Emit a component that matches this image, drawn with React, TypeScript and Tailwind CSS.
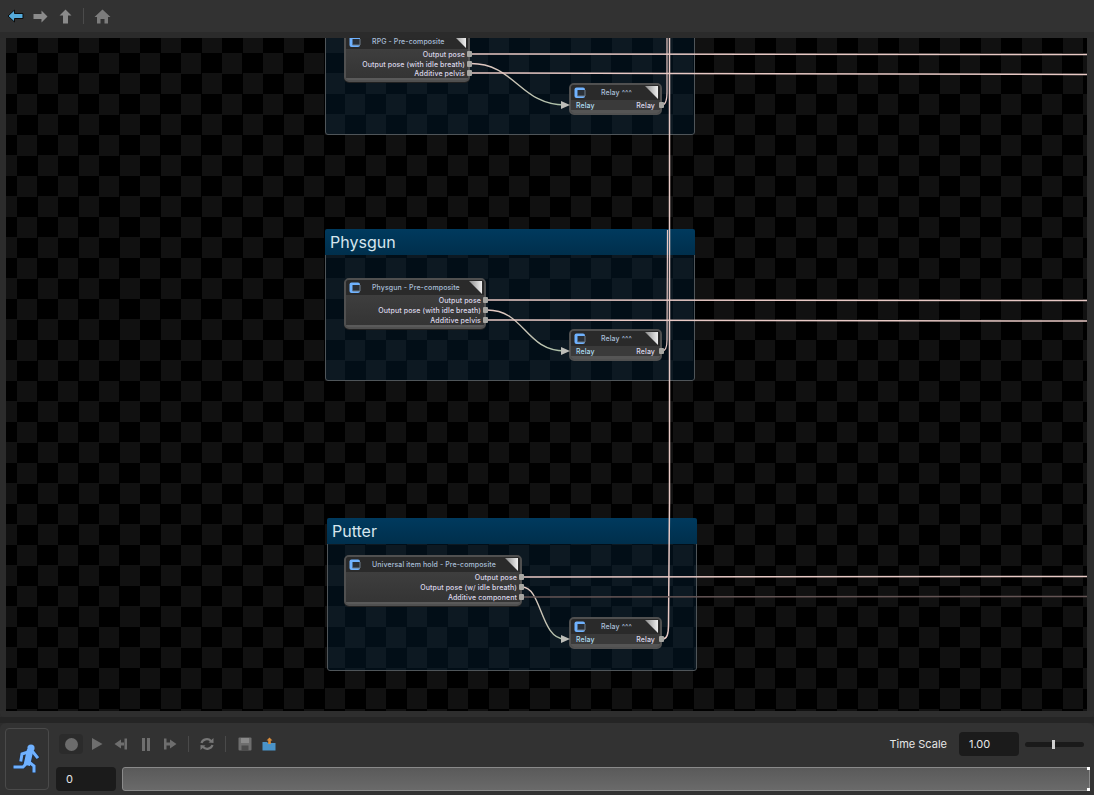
import type { ReactNode } from "react";

const font = "font-['Inter','Liberation_Sans',sans-serif]";

function NodeIcon() {
  return (
    <svg width="12" height="12" viewBox="0 0 12 12" className="shrink-0">
      <rect x="0.5" y="0.5" width="10.5" height="10.5" rx="2" fill="#6fb2ff" />
      <rect x="3.5" y="3" width="7.5" height="6" fill="#2a3038" />
      <path d="M3.5 9 L11 9 L11 3" stroke="#6f7c8a" strokeWidth="1" fill="none" />
    </svg>
  );
}

function Corner() {
  return (
    <svg width="13" height="13" viewBox="0 0 13 13" className="absolute top-[1px] right-[2px]">
      <defs>
        <linearGradient id="cornerFill" x1="0" y1="0" x2="1" y2="0">
          <stop offset="0" stopColor="#8a8a8a" />
          <stop offset="1" stopColor="#efefef" />
        </linearGradient>
      </defs>
      <polygon points="0,0 13,0 13,13" fill="url(#cornerFill)" />
    </svg>
  );
}

function Port({ side }: { side: "left" | "right" }) {
  return (
    <span
      className={
        side === "right"
          ? "absolute -right-[4px] top-[2px] h-[6px] w-[5px] rounded-[1px] bg-[#a6a6a2]"
          : "absolute -left-[10px] top-[1px] h-0 w-0 border-y-[4px] border-l-[9px] border-y-transparent border-l-[#bdbdb8]"
      }
    />
  );
}

function Node({ pos, title, rows, rowH = "h-[10px]" }: { pos: string; title: string; rows: string[]; rowH?: string }) {
  return (
    <div className={`absolute rounded-[5px] border-2 border-[#505050] bg-[#3a3a3a] shadow-[0_1px_0_#222] ${pos}`}>
      <div className="relative flex h-[15px] items-center rounded-t-[3px] bg-[#2a2a2a] pl-[3px]">
        <NodeIcon />
        <span className="flex-1 pl-[11px] pr-[20px] text-[7px] leading-none font-medium tracking-[0.1px] whitespace-nowrap text-[#a9bfd8]">{title}</span>
        <Corner />
      </div>
      <div className="bg-gradient-to-b from-[#3e3e3e] to-[#343434]">
        {rows.map((r) => (
          <div key={r} className={`relative ${rowH} pr-[3px] text-right text-[7px] leading-[11px] font-medium tracking-[0.1px] whitespace-nowrap text-[#dcd8ea]`}>
            {r}
            <Port side="right" />
          </div>
        ))}
      </div>
      <div className="h-[2px] rounded-b-[3px] bg-[#5a5a5a]" />
    </div>
  );
}

function Relay({ pos }: { pos: string }) {
  return (
    <div className={`absolute w-[93px] rounded-[5px] border-2 border-[#505050] bg-[#3a3a3a] ${pos}`}>
      <div className="relative flex h-[15px] items-center rounded-t-[3px] bg-[#2a2a2a] pl-[3px]">
        <NodeIcon />
        <span className="flex-1 pl-[15px] text-[7px] leading-none font-medium tracking-[0.1px] text-[#a9bfd8]">Relay ^^^</span>
        <Corner />
      </div>
      <div className="relative flex h-[10px] justify-between bg-[#3a3a3a] px-[5px] text-[7px] leading-[11px] font-medium tracking-[0.1px]">
        <span className="text-[#aedcf0]">Relay</span>
        <span className="text-[#dcd8ea]">Relay</span>
        <Port side="left" />
        <Port side="right" />
      </div>
      <div className="h-[3px] rounded-b-[3px] bg-[#555555]" />
    </div>
  );
}

function Group({ pos, title }: { pos: string; title?: string }) {
  return (
    <div className={`absolute w-[370px] ${pos}`}>
      <div className="absolute inset-x-0 top-[9px] bottom-0 rounded-[3px] border border-[#4f5559] bg-[#06304c]/30" />
      {title && (
        <div className="absolute inset-x-0 top-0 flex h-[26px] items-center rounded-t-[2px] bg-gradient-to-b from-[#003a5e] to-[#002f4c] pl-[5px] text-[16px] text-[#d6e6ee]">
          {title}
        </div>
      )}
    </div>
  );
}

function Wires() {
  const pink = "#e8c9c5";
  return (
    <svg viewBox="6 38 1081 673" className="absolute inset-0 h-full w-full" fill="none">
      <defs>
        <linearGradient id="a" gradientUnits="userSpaceOnUse" x1="470" y1="0" x2="565" y2="0">
          <stop offset="0" stopColor="#e8c9c5" />
          <stop offset="1" stopColor="#a9c0a6" />
        </linearGradient>
        <linearGradient id="b" gradientUnits="userSpaceOnUse" x1="487" y1="0" x2="565" y2="0">
          <stop offset="0" stopColor="#e8c9c5" />
          <stop offset="1" stopColor="#a9c0a6" />
        </linearGradient>
        <linearGradient id="c" gradientUnits="userSpaceOnUse" x1="522" y1="0" x2="565" y2="0">
          <stop offset="0" stopColor="#e8c9c5" />
          <stop offset="1" stopColor="#a9c0a6" />
        </linearGradient>
      </defs>
      <path d="M470 63.5 C515 63 520 105 565 105" stroke="url(#a)" strokeWidth="1.4" />
      <path d="M487 310 C525 310 525 351 565 351" stroke="url(#b)" strokeWidth="1.4" />
      <path d="M522 587 C542 587 540 639 565 639" stroke="url(#c)" strokeWidth="1.4" />
      <g stroke={pink} strokeWidth="1.5">
        <path d="M470 54 L1087 54.5" />
        <path d="M470 73 L1087 74.5" />
        <path d="M487 300 L1087 300.5" />
        <path d="M487 320 L1087 321" />
        <path d="M522 577 L1087 576.5" />
        <path d="M669.5 38 L669.5 500 L668.5 625 C668.5 634 667 639 663 639" />
        <path d="M662 351 C666 351 667 347 667 340 L667.5 230" strokeWidth="1.2" />
        <path d="M662 105 C666 105 667 100 667 92 L667 38" strokeWidth="1.2" />
      </g>
      <path d="M522 597 L1087 596.5" stroke="#655555" strokeWidth="1.5" />
    </svg>
  );
}

function Sep() {
  return <div className="h-[16px] w-px bg-[#4a4a4a]" />;
}

function Nav({ children, w }: { children: ReactNode; w: string }) {
  return <div className={`flex items-center justify-center ${w}`}>{children}</div>;
}

function Runner() {
  const limbs = "M20 760 L21 754 L27 752 L32 752 L36 757 M25 764 L22 767 L14 767 M28 762 L33 766 L33 771";
  return (
    <svg width="28" height="32" viewBox="12 743 28 32" fill="none">
      <g stroke="#1a2c48" strokeLinecap="square" strokeLinejoin="miter">
        <path d={limbs} strokeWidth="4" />
        <path d="M28.5 753 L26.5 762" strokeWidth="7.5" />
      </g>
      <g stroke="#6fb1ff" strokeLinecap="square" strokeLinejoin="miter">
        <path d={limbs} strokeWidth="3" />
        <path d="M28.5 753 L26.5 762" strokeWidth="6.5" />
      </g>
      <circle cx="30" cy="748" r="3.6" fill="#6fb1ff" />
    </svg>
  );
}

export default function App() {
  return (
    <div className={`flex h-[795px] w-[1094px] flex-col overflow-hidden bg-[#2c2c2c] ${font}`}>
      {/* toolbar */}
      <div className="h-[38px] shrink-0 border-b-[6px] border-[#2b2b2b] bg-[#323232]">
        <div className="flex h-[32px] items-center pl-[7px]">
          <Nav w="w-[17px]">
            <svg width="17" height="14" viewBox="0 0 17 14">
              <path d="M1 7 L7.5 1 V4.5 H16 V9.5 H7.5 V13 Z" fill="#55abdc" stroke="#0d0d0d" strokeWidth="1" />
            </svg>
          </Nav>
          <Nav w="w-[15px] ml-[9px]">
            <svg width="15" height="13" viewBox="0 0 15 13">
              <path d="M14.5 6.5 L8.5 0.5 V4 H0.5 V9 H8.5 V12.5 Z" fill="#8b8b8b" />
            </svg>
          </Nav>
          <Nav w="w-[14px] ml-[10px]">
            <svg width="13" height="15" viewBox="0 0 13 15">
              <path d="M6.5 0.5 L12.5 6.5 H9 V14.5 H4 V6.5 H0.5 Z" fill="#8b8b8b" />
            </svg>
          </Nav>
          <div className="ml-[11px] h-[16px] w-px bg-[#4b4b4b]" />
          <Nav w="w-[17px] ml-[10px]">
            <svg width="17" height="15" viewBox="0 0 17 15">
              <path d="M8.5 0.5 L16.5 8 H14 V14.5 H10.5 V10 H6.5 V14.5 H3 V8 H0.5 Z" fill="#7c7c7c" />
            </svg>
          </Nav>
        </div>
      </div>

      {/* graph canvas */}
      <div className="h-[673px] shrink-0 px-[6px]">
        <div className="relative h-full w-[1081px] overflow-hidden bg-[repeating-conic-gradient(#000_0_25%,#111111_0_50%)] bg-[size:41px_41px] bg-[position:11px_15px]">
          <Group pos="left-[319px] top-[-203px] h-[300px]" />
          <Group pos="left-[319px] top-[191px] h-[152px]" title="Physgun" />
          <Group pos="left-[321px] top-[480px] h-[153px]" title="Putter" />

          <Wires />

          <Node pos="left-[338px] top-[-6px] w-[126px]" title="RPG - Pre-composite" rowH="h-[9.5px]" rows={["Output pose", "Output pose (with idle breath)", "Additive pelvis"]} />
          <Relay pos="left-[563px] top-[45px]" />
          <Node pos="left-[338px] top-[240px] w-[142px]" title="Physgun - Pre-composite" rows={["Output pose", "Output pose (with idle breath)", "Additive pelvis"]} />
          <Relay pos="left-[563px] top-[291px]" />
          <Node pos="left-[338px] top-[517px] w-[178px]" title="Universal item hold - Pre-composite" rows={["Output pose", "Output pose (w/ idle breath)", "Additive component"]} />
          <Relay pos="left-[563px] top-[579px]" />
        </div>
      </div>

      {/* divider */}
      <div className="h-[6px] shrink-0 rounded-b-[4px] bg-[#2e2e2e]" />
      <div className="h-[6px] shrink-0 bg-[#252525]" />

      {/* playback panel */}
      <div className="flex h-[72px] shrink-0 rounded-t-[6px] bg-[#323232] pl-[5px]">
        <div className="mt-[5px] flex h-[62px] w-[44px] items-center justify-center rounded-[4px] border border-[#4a4a4a]">
          <Runner />
        </div>
        <div className="ml-[7px] flex w-[1034px] flex-col pt-[9px]">
          <div className="flex h-[24px] items-center">
            <div className="ml-[3px] flex h-[20px] w-[24px] items-center justify-center rounded-[4px] bg-[#2b2b2b]">
              <div className="h-[13px] w-[13px] rounded-full bg-[#6c6c6c]" />
            </div>
            <svg width="12" height="14" viewBox="0 0 12 14" className="ml-[8px]">
              <path d="M1 1 L11.5 7 L1 13 Z" fill="#6e6e6e" />
            </svg>
            <svg width="14" height="12" viewBox="0 0 14 12" className="ml-[11px]">
              <path d="M0.5 6 L7 1.5 V4.5 H10 V7.5 H7 V10.5 Z M10.5 0.5 H13 V11.5 H10.5 Z" fill="#6e6e6e" />
            </svg>
            <div className="ml-[14px] flex gap-[2px]">
              <div className="h-[13px] w-[3px] bg-[#6e6e6e]" />
              <div className="h-[13px] w-[3px] bg-[#6e6e6e]" />
            </div>
            <svg width="14" height="12" viewBox="0 0 14 12" className="ml-[13px]">
              <path d="M13.5 6 L7 1.5 V4.5 H3.5 V7.5 H7 V10.5 Z M1 0.5 H3.5 V11.5 H1 Z" fill="#6e6e6e" />
            </svg>
            <div className="ml-[11px]"><Sep /></div>
            <svg width="14" height="14" viewBox="0 0 14 14" fill="none" className="ml-[11px]">
              <path d="M1.5 6 A5.5 5 0 0 1 11 4" stroke="#777" strokeWidth="2.2" />
              <path d="M12.5 8 A5.5 5 0 0 1 3 10" stroke="#777" strokeWidth="2.2" />
              <path d="M8.5 5.5 L13.5 1 V6 Z M5.5 8.5 L0.5 13 V8 Z" fill="#777" />
            </svg>
            <div className="ml-[11px]"><Sep /></div>
            <svg width="14" height="14" viewBox="0 0 14 14" className="ml-[12px]">
              <rect x="0.5" y="0.5" width="13" height="13" rx="1" fill="#6e6e6e" />
              <rect x="3" y="1" width="8" height="5" fill="#8a8a8a" />
              <rect x="3.5" y="8.5" width="7" height="5" fill="#4b4b4b" />
            </svg>
            <svg width="14" height="14" viewBox="0 0 14 14" className="ml-[10px]">
              <path d="M0.5 5 H5 L6 6 H13.5 V13.5 H0.5 Z" fill="#4a93c8" />
              <path d="M7.5 0.5 L10.5 3.5 H8.8 V7 H6.2 V3.5 H4.5 Z" fill="#d98d3c" />
            </svg>
            <span className="ml-auto text-[11px] text-[#e6e6e6]">Time Scale</span>
            <div className="ml-[12px] flex h-[24px] w-[60px] items-center rounded-[4px] bg-[#1b1b1b] pl-[10px] text-[11px] text-[#e6e6e6]">1.00</div>
            <div className="relative ml-[6px] mr-[6px] h-[5px] w-[59px] rounded-full bg-[#1a1a1a]">
              <div className="absolute left-[27px] -top-[2px] h-[9px] w-[3px] bg-[#d0d0d0]" />
            </div>
          </div>
          <div className="mt-[11px] flex h-[24px] gap-[6px]">
            <div className="flex w-[60px] items-center rounded-[4px] bg-[#1b1b1b] pl-[10px] text-[11px] text-[#e6e6e6]">0</div>
            <div className="relative flex-1 rounded-[3px] border border-[#8a8a8a] bg-gradient-to-b from-[#5a5a5a] to-[#6a6a6a]">
              <div className="absolute -right-px -top-px h-[3px] w-[3px] bg-white" />
              <div className="absolute -right-px -bottom-px h-[3px] w-[3px] bg-white" />
            </div>
          </div>
        </div>
      </div>
    </div>
  );
}
